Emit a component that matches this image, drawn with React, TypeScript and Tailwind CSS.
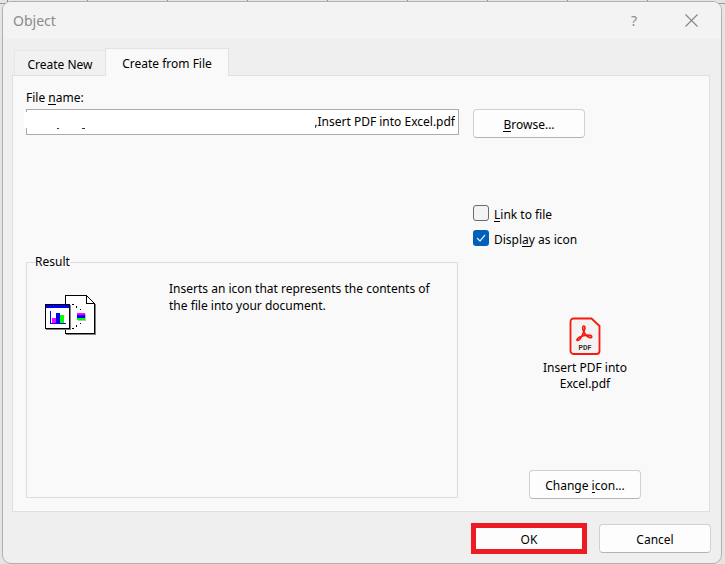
import type { ReactNode } from "react";

const buttonClass =
  "flex h-[29px] items-center justify-center rounded-[4px] border border-[#d0d0d0] border-b-[#b4b4b4] bg-[#fdfdfd] pt-[2px]";

function Key({ children }: { children: ReactNode }) {
  return <span className="inline-block h-[13px] border-b border-black leading-none">{children}</span>;
}

function SheetGrid() {
  return (
    <div className="absolute inset-x-0 top-0 flex h-[4px] overflow-hidden border-b border-[#9a9a9a] pl-[7px]" aria-hidden="true">
      {Array.from({ length: 10 }, (_, i) => (
        <div key={i} className="w-[80px] shrink-0 border-l border-[#8a8a8a]" />
      ))}
    </div>
  );
}

function ObjectIcon() {
  return (
    <svg width="52" height="42" viewBox="0 0 52 42" shapeRendering="crispEdges" aria-hidden="true">
      <path d="M21 9h30v31H21z" fill="#808080" />
      <path d="M20 0h22v1h1v1h1v1h1v1h1v1h1v1h1v1h1v1h1v31H20z" fill="#000" />
      <path d="M21 1h20v8h8v29H21z" fill="#fff" />
      <path d="M42 2h1v1h1v1h1v1h1v1h1v1h1v1h-6z" fill="#fff" />
      <path d="M1 10h25v25H1z" fill="#808080" />
      <path d="M0 9h25v25H0z" fill="#000" />
      <path d="M1 10h23v23H1z" fill="#fff" />
      <path d="M1 10h23v3H1z" fill="#00f" />
      <path d="M5 16h1v12h15v1H5z" fill="#00f" />
      <path d="M7 23h4v5H7z" fill="#f0f" />
      <path d="M11 18h4v10h-4z" fill="#00f" />
      <path d="M15 20h4v8h-4z" fill="#0f0" />
      <path d="M27 9h2v1h-2zM31 11h1v2h-1zM35 14h1v1h-1zM27 33h2v1h-2zM31 30h1v2h-1zM35 28h1v1h-1z" fill="#000" />
      <path d="M33 19h8v7h-8z" fill="#c0c0c0" />
      <path d="M32 18h8v2h-8z" fill="#f0f" />
      <path d="M32 20h8v3h-8z" fill="#00f" />
      <path d="M32 23h8v2h-8z" fill="#0f0" />
    </svg>
  );
}

function PdfIcon() {
  return (
    <svg width="32" height="38" viewBox="0 0 32 38" aria-hidden="true">
      <path
        d="M4.500 1.500h18l8 7.500v25a3 3 0 0 1-3 3h-23a3 3 0 0 1-3-3V4.500a3 3 0 0 1 3-3z"
        fill="#f5f2f2"
        stroke="#f5190f"
        strokeWidth="1.800"
      />
      <path
        d="M15 9c-1.800 0-1.600 2.600-.4 5.400 1.200 2.900 3.900 5.600 6.400 6.300 2.200.4 2.400-1.900.2-2.300-3-.6-8 .4-10.800 1.900-2.500 1.400-3 3-1.800 3.200 1.700.1 4.500-4.400 6.200-8.600C16 12 16.600 9.300 15 9z"
        fill="none"
        stroke="#f5190f"
        strokeWidth="1.700"
      />
      <text x="16" y="33" textAnchor="middle" fontSize="7" fontWeight="700" fontFamily="Roboto, sans-serif" fill="#333">
        PDF
      </text>
    </svg>
  );
}

export default function App() {
  return (
    <div className="relative flex min-h-screen flex-col bg-[#e4e4e4] pt-px pr-[3px] pb-px pl-[2px] font-['Noto_Sans',sans-serif] text-[12px] leading-[16px] text-black">
      <SheetGrid />
      <main className="relative flex flex-1 flex-col overflow-hidden rounded-[9px] border border-[#b0b0b0] bg-[#efefef]">
        <header className="flex h-[37px] shrink-0 items-center bg-[#f3f3f3] pr-[18px] pl-[10px] text-[#8b8b8b]">
          <h1 className="flex-1 text-[14px]">Object</h1>
          <button type="button" aria-label="Help" className="w-[24px] text-[14px]">
            ?
          </button>
          <button type="button" aria-label="Close" className="ml-[33px] flex w-[24px] justify-center">
            <svg width="13" height="13" viewBox="0 0 13 13" stroke="#858585" strokeWidth="1.100" aria-hidden="true">
              <path d="M.5.500l12 12M12.500.500l-12 12" />
            </svg>
          </button>
        </header>

        <div role="tablist" className="mt-[9px] flex items-end pl-[11px]">
          <button type="button" role="tab" aria-selected="false" className="h-[25px] w-[91px] border-t border-l border-[#e6e6e6] bg-[#f1f1f1] pt-[4px]">
            Create New
          </button>
          <button type="button" role="tab" aria-selected="true" className="relative z-10 -mb-px h-[28px] w-[124px] border border-b-0 border-[#e2e2e2] bg-[#f9f9f9] pt-[2px]">
            Create from File
          </button>
        </div>

        <section role="tabpanel" className="mr-[11px] ml-[9px] flex gap-[14px] border border-[#e0e0e0] bg-[#f9f9f9] pt-[14px] pr-[12px] pb-[12px] pl-[13px]">
          <div className="flex flex-1 flex-col">
            <label htmlFor="file" className="h-[19px]">
              File <Key>n</Key>ame:
            </label>
            <div className="relative">
              <input
                id="file"
                type="text"
                defaultValue=",Insert PDF into Excel.pdf"
                className="block h-[26px] w-full border border-[#ababb0] bg-white pr-[3px] pb-[2px] text-right outline-none"
              />
              <div className="absolute top-[3px] -left-[2px] h-[16px] w-[291px] bg-white" />
              <div className="absolute top-[19px] left-[31px] flex gap-[23px]">
                <span className="h-px w-[2px] bg-[#333]" />
                <span className="h-px w-[3px] bg-[#333]" />
              </div>
            </div>
            <fieldset className="mt-[119px] mr-px h-[244px] border border-[#dcdcdc] px-[8px]">
              <legend>Result</legend>
              <div className="flex pt-[10px] pl-[10px]">
                <div className="w-[124px] pt-[15px]">
                  <ObjectIcon />
                </div>
                <p className="flex-1 leading-[17px]">
                  Inserts an icon that represents the contents of
                  <br />
                  the file into your document.
                </p>
              </div>
            </fieldset>
          </div>

          <div className="flex w-[224px] flex-col pt-[19px]">
            <button type="button" className={buttonClass + " w-[112px]"}>
              <span>
                <Key>B</Key>rowse...
              </span>
            </button>
            <div className="mt-[67px] flex flex-col gap-[9px]">
              <label className="flex h-[16px] items-center gap-[5px]">
                <input type="checkbox" className="size-[16px] appearance-none rounded-[3px] border border-[#6a6a6a] bg-[#f3f3f3]" />
                <span className="pt-[4px]">
                  <Key>L</Key>ink to file
                </span>
              </label>
              <label className="relative flex h-[16px] items-center gap-[5px]">
                <input type="checkbox" defaultChecked className="size-[16px] appearance-none rounded-[3px] bg-[#005fb8]" />
                <svg className="pointer-events-none absolute top-0 left-0" width="16" height="16" viewBox="0 0 16 16" fill="none" stroke="#d8eaff" strokeWidth="1.200" aria-hidden="true">
                  <path d="M4 8l3 3 5-6" />
                </svg>
                <span className="pt-[4px]">
                  Displ<Key>a</Key>y as icon
                </span>
              </label>
            </div>
            <figure className="mt-[71px] flex flex-col items-center text-center">
              <PdfIcon />
              <figcaption className="mt-[5px]">
                Insert PDF into
                <br />
                Excel.pdf
              </figcaption>
            </figure>
            <button type="button" className={buttonClass + " mt-[78px] w-[112px] self-center"}>
              <span>
                Change <Key>i</Key>con...
              </span>
            </button>
          </div>
        </section>

        <footer className="mt-[11px] flex justify-end gap-[12px] pr-[10px] pb-[9px]">
          <button type="button" className="flex h-[31px] w-[116px] items-center justify-center border-[5px] border-[#ed1c24] bg-[#fdfdfd] pt-[2px]">
            OK
          </button>
          <button type="button" className={buttonClass + " mt-px w-[112px]"}>
            Cancel
          </button>
        </footer>
      </main>
    </div>
  );
}
